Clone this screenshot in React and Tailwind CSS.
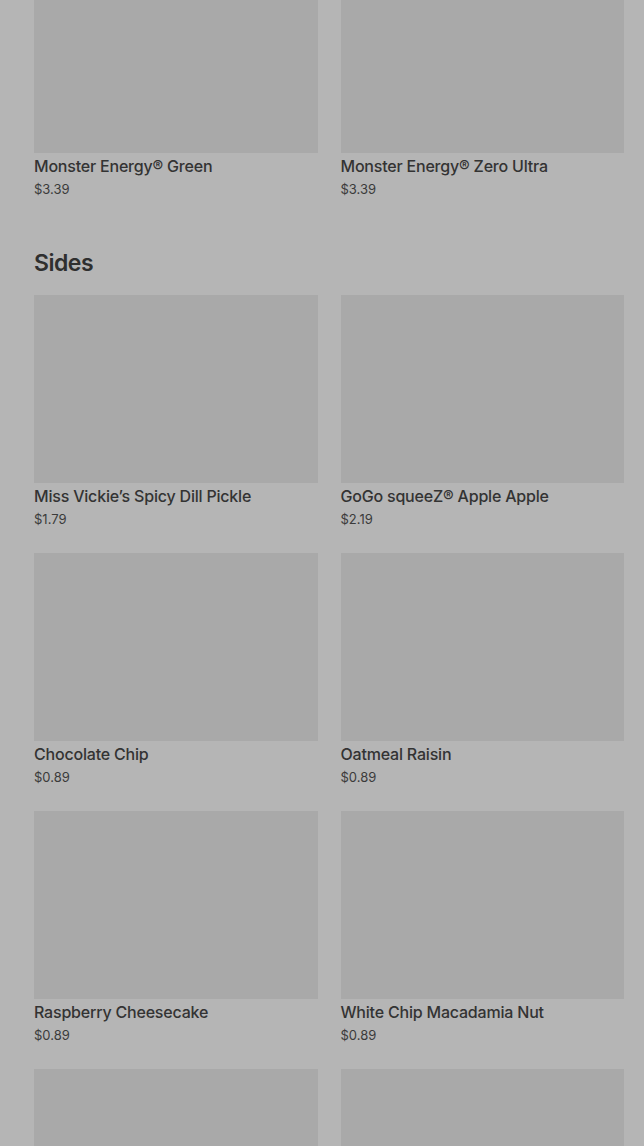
import React from 'react';

const drinks = [
    { name: 'Monster Energy® Green', price: '$3.39' },
    { name: 'Monster Energy® Zero Ultra', price: '$3.39' },
];

const sides = [
    { name: 'Miss Vickie’s Spicy Dill Pickle', price: '$1.79' },
    { name: 'GoGo squeeZ® Apple Apple', price: '$2.19' },
    { name: 'Chocolate Chip', price: '$0.89' },
    { name: 'Oatmeal Raisin', price: '$0.89' },
    { name: 'Raspberry Cheesecake', price: '$0.89' },
    { name: 'White Chip Macadamia Nut', price: '$0.89' },
];

const ItemCard = ({ item }) => (
    <div className="flex flex-col pb-[25px]">
        <div className="h-[188px] bg-[#a9a9a9]"></div>
        <p className="mt-[2px] text-[16px] leading-[22px] font-medium tracking-[-0.2px] text-[#333333]">{item.name}</p>
        <p className="mt-[3px] text-[13px] leading-[18px] text-[#3b3b3b]">{item.price}</p>
    </div>
);

const App = () => {
    return (
        <div className="h-[1146px] overflow-hidden bg-[#b5b5b5] font-['Inter',sans-serif]">
            <div className="pl-[34px] pr-[20px] mt-[-35px]">
                {/* drinks row, scrolled partly off */}
                <div className="grid grid-cols-2 gap-x-[23px]">
                    {drinks.map((d) => (
                        <ItemCard key={d.name} item={d} />
                    ))}
                </div>

                {/* Sides */}
                <h2 className="mt-[24px] mb-[16px] text-[23px] leading-[32px] font-semibold text-[#2f2f2f] tracking-[-0.5px]">Sides</h2>
                <div className="grid grid-cols-2 gap-x-[23px]">
                    {sides.map((s) => (
                        <ItemCard key={s.name} item={s} />
                    ))}
                    {/* next row, only the images show above the fold */}
                    <div className="h-[188px] bg-[#a9a9a9]"></div>
                    <div className="h-[188px] bg-[#a9a9a9]"></div>
                </div>
            </div>
        </div>
    );
};

export default App;
